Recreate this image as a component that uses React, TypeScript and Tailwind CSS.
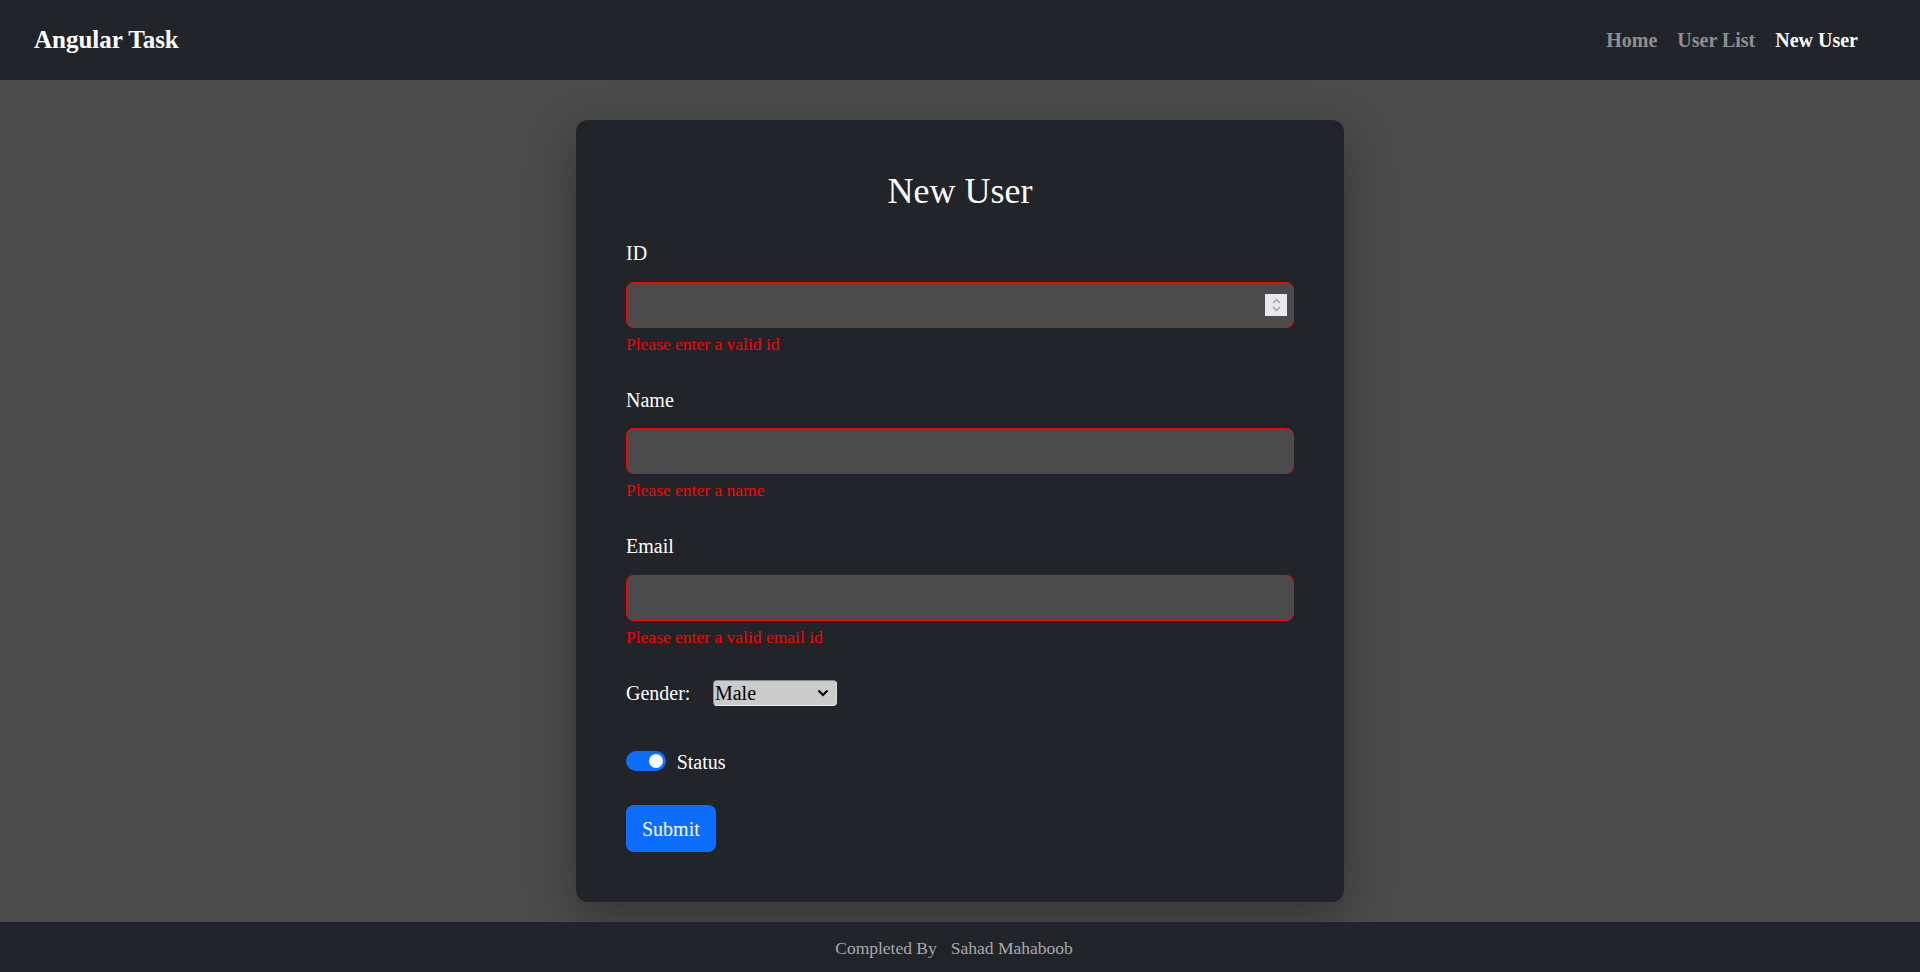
import React from "react";

const serif = "font-['Liberation_Serif','Times_New_Roman',serif]";

function Field({
  label,
  error,
  type = "text",
  spinner = false,
  last = false,
}: {
  label: string;
  error: string;
  type?: string;
  spinner?: boolean;
  last?: boolean;
}) {
  return (
    <div className={`flex flex-col ${last ? "" : "mb-[28px]"}`}>
      <label className="text-[20px] leading-[30px] text-white mb-[13.5px]">{label}</label>
      <div className="flex items-center h-[46px] rounded-[7.5px] border border-[#ff0000] bg-[#4b4b4b] pl-[15px] pr-[6px]">
        <input
          type={type === "number" ? "text" : type}
          className={`flex-1 min-w-0 h-full bg-transparent outline-none text-white text-[20px] ${serif}`}
        />
        {spinner && (
          <div className="w-[22px] h-[22px] bg-[#e9e9ed] flex flex-col items-center justify-center gap-[2px]">
            <svg width="9" height="6" viewBox="0 0 9 6" fill="none">
              <path d="M1 5 L4.5 1.5 L8 5" stroke="#9b9ba8" strokeWidth="1.4" />
            </svg>
            <svg width="9" height="6" viewBox="0 0 9 6" fill="none">
              <path d="M1 1 L4.5 4.5 L8 1" stroke="#9b9ba8" strokeWidth="1.4" />
            </svg>
          </div>
        )}
      </div>
      <div className="text-[17.5px] leading-[26px] text-[#ff0000] mt-[3px]">{error}</div>
    </div>
  );
}

export default function App() {
  return (
    <div className={`min-h-screen flex flex-col bg-[#4b4b4b] ${serif}`}>
      <header className="h-[80px] shrink-0 bg-[#212529] flex items-center justify-between pl-[34px] pr-[62px]">
        <span className="text-[25px] font-bold text-white">Angular Task</span>
        <nav className="flex items-center gap-[20px] text-[20px] font-bold">
          <a className="text-[#8e9093]">Home</a>
          <a className="text-[#8e9093]">User List</a>
          <a className="text-white">New User</a>
        </nav>
      </header>

      <main className="flex-1 flex justify-center pt-[40px] pb-[20px]">
        <div className="w-[768px] self-start rounded-[12px] bg-[#212529] p-[50px] shadow-[0_16px_50px_rgba(0,0,0,0.3)]">
          <h2 className="text-[36px] leading-[43px] text-white text-center mb-[25px]">New User</h2>

          <Field label="ID" error="Please enter a valid id" type="number" spinner />
          <Field label="Name" error="Please enter a name" />
          <Field label="Email" error="Please enter a valid email id" type="email" last />

          <div className="flex items-center h-[26px] mt-[30px]">
            <span className="text-[20px] text-white">Gender:</span>
            <div className="ml-[22.5px] w-[124px] h-[26px] flex items-center justify-between rounded-[4px] bg-[#cbcbcb] border border-t-[#8a8a8a] border-l-[#8a8a8a] border-r-[#e2e2e2] border-b-[#eeeeee] pl-[1px] pr-[7px]">
              <span className="text-[20px] leading-[24px] text-black">Male</span>
              <svg width="12" height="8" viewBox="0 0 12 8" fill="none">
                <path d="M1.5 1.5 L6 6 L10.5 1.5" stroke="#000" strokeWidth="2" />
              </svg>
            </div>
          </div>

          <div className="flex items-center h-[20px] mt-[45.7px] gap-[10.7px]">
            <div className="w-[40px] h-[20px] rounded-full bg-[#0d6efd] flex items-center justify-end pr-[3px]">
              <div className="w-[14px] h-[14px] rounded-full bg-white" />
            </div>
            <span className="text-[20px] leading-[20px] text-white pt-[2px]">Status</span>
          </div>

          <button className="mt-[34px] h-[47px] px-[16px] rounded-[7.5px] bg-[#0d6efd] text-white text-[20px] leading-[30px]">
            Submit
          </button>
        </div>
      </main>

      <footer className="h-[51px] shrink-0 bg-[#212529] flex items-center justify-center pr-[12px] text-[17.5px] text-[#a9a9a9]">
        <span className="mr-[14px]">Completed By</span>
        <span>Sahad Mahaboob</span>
      </footer>
    </div>
  );
}
